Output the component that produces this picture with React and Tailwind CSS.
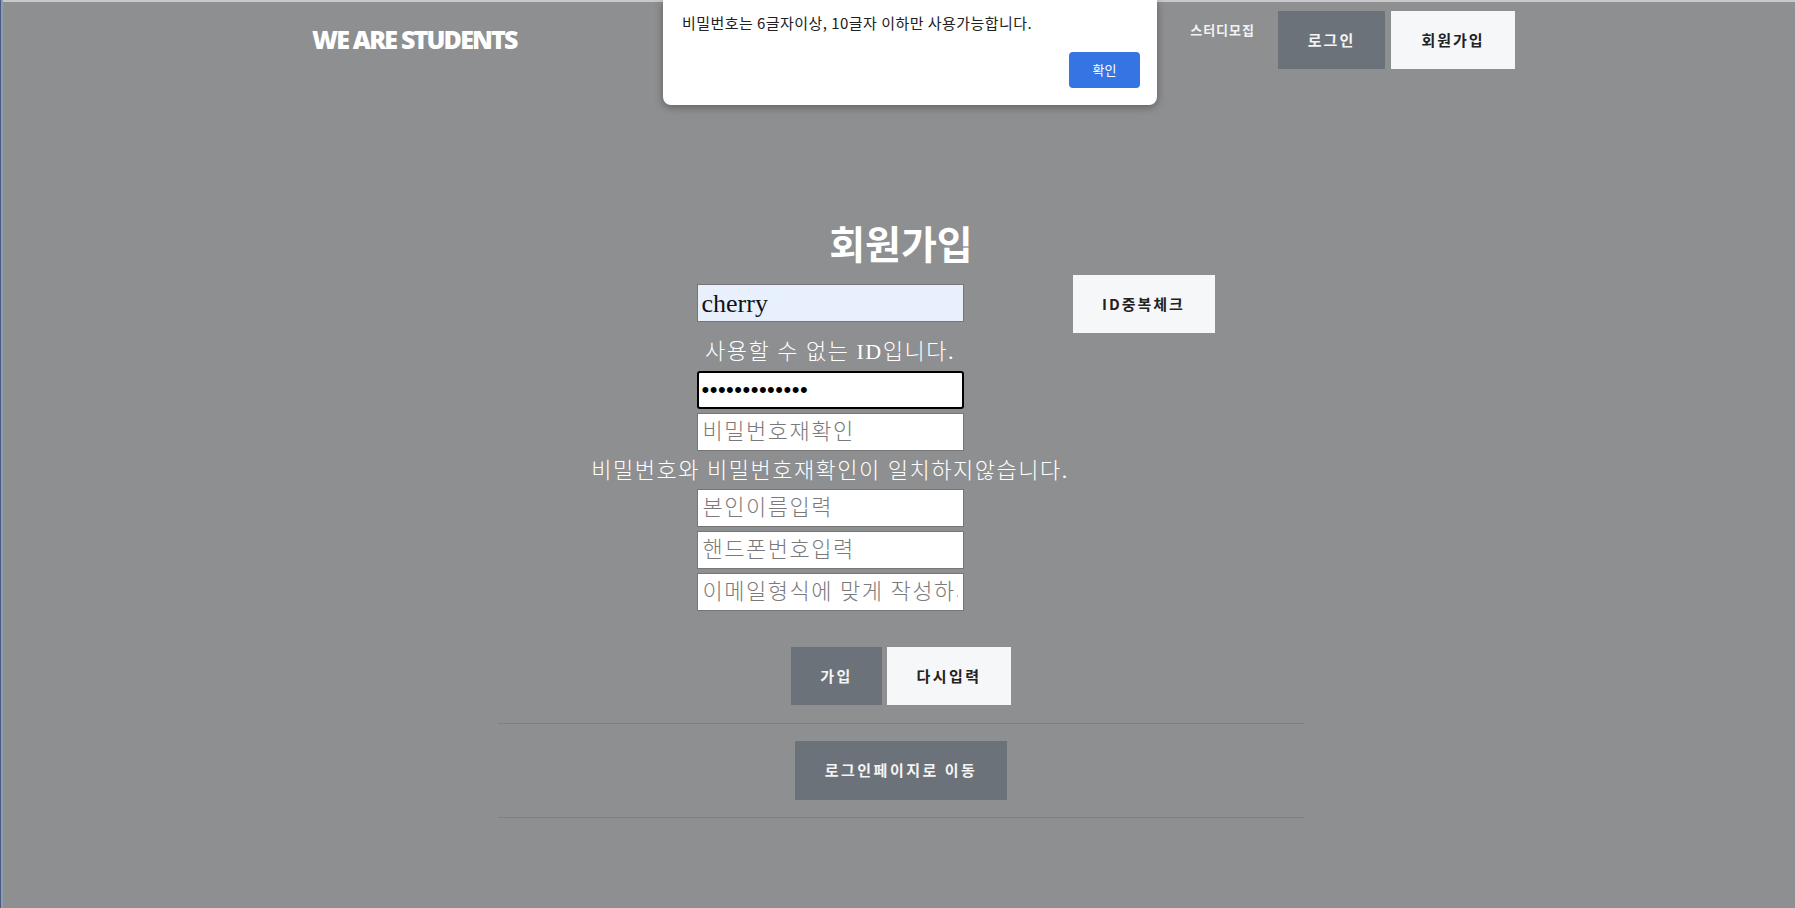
export default function App() {
  const kr = "font-['Noto_Sans_CJK_KR',sans-serif]";
  const serif = "font-['Liberation_Serif','Noto_Sans_CJK_KR',serif]";
  const field = `w-[267px] h-[38px] bg-white border border-[#767676] px-[5px] text-[22px] tracking-[1.5px] font-light placeholder:text-[#7a7a7a] outline-none ${serif}`;
  return (
    <div className="relative min-h-screen h-[908px] flex bg-[#8e8f91] overflow-hidden">
      <div className="w-[3px] shrink-0 bg-[#8b9bb6] border-l border-[#4a5a78]" />
      <div className="flex-1 flex flex-col border-t-2 border-[#c9c9cb]">
        {/* header */}
        <header className="h-[78px] flex items-start pl-[309px] pr-[280px]">
          <div className="mt-[25px] text-white text-[25px] leading-[25px] font-extrabold tracking-[-1.8px] font-['Open_Sans',sans-serif]">
            WE ARE STUDENTS
          </div>
          <nav className={`ml-auto flex items-start ${kr}`}>
            <a className="mt-[20px] mr-[23px] text-[13px] leading-[16px] font-bold tracking-[1px] text-[#f2f2f2]">
              스터디모집
            </a>
            <button className="mt-[9px] w-[107px] h-[58px] bg-[#6c727a] text-[#f4f4f4] text-[15px] font-bold tracking-[2px]">
              로그인
            </button>
            <button className="mt-[9px] ml-[6px] w-[124px] h-[58px] bg-[#f6f7f9] text-[#222] text-[15px] font-bold tracking-[2px]">
              회원가입
            </button>
          </nav>
        </header>

        {/* main */}
        <main className="flex flex-col items-center pl-[4px]">
          <h1 className={`mt-[143px] text-white text-[39px] leading-[39px] font-bold ${kr}`}>회원가입</h1>

          <div className="mt-[13px] flex">
            <div className="w-[485px] mt-[9px] flex flex-col items-center gap-[4px]">
              <input
                readOnly
                defaultValue="cherry"
                className={`w-[267px] h-[38px] bg-[#e8f0fe] border border-[#767676] px-[4px] text-[26px] text-[#111] outline-none ${serif}`}
              />
              <div className={`h-[41px] pt-[14px] leading-[24px] text-[22px] tracking-[1.5px] text-white font-light ${serif}`}>
                사용할 수 없는 ID입니다.
              </div>
              <input
                readOnly
                type="password"
                defaultValue="1234567890123"
                className="w-[267px] h-[38px] bg-white border-2 border-black rounded-[3px] px-[3px] text-[22px] tracking-[0.5px] text-black outline-none shadow-[inset_0_0_0_1px_white] font-['Liberation_Sans',sans-serif]"
              />
              <input readOnly placeholder="비밀번호재확인" className={field} />
              <div className={`h-[30px] pt-[4px] leading-[24px] text-[22px] tracking-[1.5px] text-white whitespace-nowrap font-light ${serif}`}>
                비밀번호와 비밀번호재확인이 일치하지않습니다.
              </div>
              <input readOnly placeholder="본인이름입력" className={field} />
              <input readOnly placeholder="핸드폰번호입력" className={field} />
              <input readOnly placeholder="이메일형식에 맞게 작성하세요" className={field} />
            </div>
            <button className={`w-[142px] h-[58px] bg-[#f6f7f9] text-[#222] text-[15px] font-bold tracking-[2px] ${kr}`}>
              ID중복체크
            </button>
          </div>

          <div className={`mt-[36px] flex gap-[5px] ${kr}`}>
            <button className="w-[91px] h-[58px] bg-[#6c727a] text-[#f4f4f4] text-[15px] font-bold tracking-[2.5px]">
              가입
            </button>
            <button className="w-[124px] h-[58px] bg-[#f6f7f9] text-[#222] text-[15px] font-bold tracking-[2.5px]">
              다시입력
            </button>
          </div>

          <hr className="mt-[18px] w-[806px] border-0 border-t border-[#7e7f82]" />

          <button className={`mt-[17px] w-[212px] h-[59px] bg-[#6c727a] text-[#f4f4f4] text-[15px] font-bold tracking-[2.5px] ${kr}`}>
            로그인페이지로 이동
          </button>

          <hr className="mt-[17px] w-[806px] border-0 border-t border-[#7e7f82]" />
        </main>
      </div>

      {/* alert dialog */}
      <div className="absolute top-0 left-[663px] w-[494px] h-[105px] bg-white rounded-b-[8px] shadow-[0_2px_8px_rgba(0,0,0,0.35)] font-['Noto_Sans_CJK_KR',sans-serif]">
        <p className="absolute left-[19px] top-[12px] text-[15px] leading-[22px] text-[#202124] tracking-[0.45px]">
          비밀번호는 6글자이상, 10글자 이하만 사용가능합니다.
        </p>
        <button className="absolute right-[17px] bottom-[17px] w-[71px] h-[36px] rounded-[4px] bg-[#3574e3] text-white text-[13px]">
          확인
        </button>
      </div>
    </div>
  );
}
